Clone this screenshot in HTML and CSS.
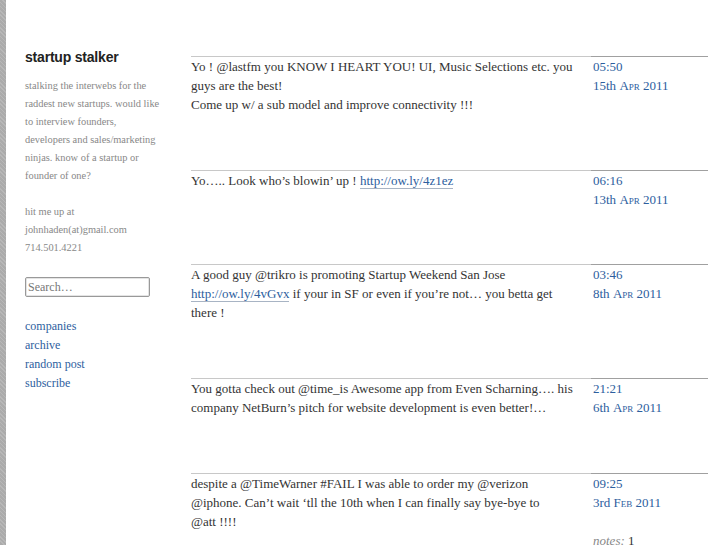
FILE: index.html
```html
<!DOCTYPE html>
<html>
<head>
<meta charset="utf-8">
<title>startup stalker</title>
<link rel="stylesheet" href="styles.css">
</head>
<body>
<div class="page">
  <div class="stripe"></div>
  <aside class="sidebar">
    <h1 class="title">startup stalker</h1>
    <p class="desc">stalking the interwebs for the raddest new startups. would like to interview founders, developers and sales/marketing ninjas. know of a startup or founder of one?</p>
    <p class="desc">hit me up at<br>johnhaden(at)gmail.com<br>714.501.4221</p>
    <div class="search">Search…</div>
    <nav class="nav">
      <a href="#">companies</a>
      <a href="#">archive</a>
      <a href="#">random post</a>
      <a href="#">subscribe</a>
    </nav>
  </aside>
  <main class="main">
    <div class="post">
      <div class="body">Yo ! @lastfm you KNOW I HEART YOU! UI, Music Selections etc. you guys are the best!<br>Come up w/ a sub model and improve connectivity !!!</div>
      <div class="meta"><a href="#">05:50</a><a href="#">15th <span class="sc">Apr</span> 2011</a></div>
    </div>
    <div class="post">
      <div class="body">Yo….. Look who’s blowin’ up ! <a class="link" href="#">http://ow.ly/4z1ez</a></div>
      <div class="meta"><a href="#">06:16</a><a href="#">13th <span class="sc">Apr</span> 2011</a></div>
    </div>
    <div class="post">
      <div class="body">A good guy @trikro is promoting Startup Weekend San Jose <a class="link" href="#">http://ow.ly/4vGvx</a> if your in SF or even if you’re not… you betta get there !</div>
      <div class="meta"><a href="#">03:46</a><a href="#">8th <span class="sc">Apr</span> 2011</a></div>
    </div>
    <div class="post">
      <div class="body">You gotta check out @time_is Awesome app from Even Scharning…. his company NetBurn’s pitch for website development is even better!…</div>
      <div class="meta"><a href="#">21:21</a><a href="#">6th <span class="sc">Apr</span> 2011</a></div>
    </div>
    <div class="post">
      <div class="body">despite a @TimeWarner #FAIL I was able to order my @verizon @iphone. Can’t wait ‘tll the 10th when I can finally say bye-bye to<br>@att !!!!</div>
      <div class="meta"><a href="#">09:25</a><a href="#">3rd <span class="sc">Feb</span> 2011</a><span class="notes"><em>notes:</em> 1</span></div>
    </div>
  </main>
</div>
</body>
</html>
```

FILE: styles.css
```css
html, body {
  margin: 0;
  padding: 0;
  background: #fff;
}
body {
  font-family: "Liberation Serif", "Times New Roman", serif;
  color: #333;
  overflow: hidden;
}
.page {
  display: flex;
  align-items: flex-start;
  min-height: 545px;
}
.stripe {
  width: 6px;
  align-self: stretch;
  background-color: #ababab;
  background-image: repeating-linear-gradient(45deg, rgba(255,255,255,0.15) 0 1px, transparent 1px 3px);
  flex: none;
}
.sidebar {
  width: 150px;
  margin-left: 19px;
  flex: none;
}
.title {
  font-family: "Liberation Sans", Arial, sans-serif;
  font-weight: bold;
  font-size: 14px;
  color: #222;
  margin: 48px 0 0 0;
  line-height: 18px;
  letter-spacing: -0.2px;
}
.desc {
  font-size: 10.4px;
  line-height: 18px;
  color: #888;
  margin: 11px 0 18px 0;
  width: 139px;
}
.desc + .desc {
  margin-top: 0;
}
.search {
  width: 119px;
  height: 18px;
  border: 1px solid #999;
  border-radius: 2px;
  box-shadow: inset 0 0 0 1px #e4e4e4;
  font-size: 12px;
  line-height: 18px;
  padding: 0 2px;
  color: #777;
  margin-top: 20px;
}
.nav {
  display: flex;
  flex-direction: column;
  margin-top: 20px;
}
.nav a {
  font-size: 12px;
  line-height: 19px;
  color: #2d5e9e;
  text-decoration: none;
}
.main {
  margin-left: 16px;
  margin-top: 56px;
  display: flex;
  flex-direction: column;
}
.post {
  display: flex;
  margin-bottom: 55px;
}
.body {
  width: 385px;
  padding: 0 15px 1px 0;
  border-top: 1px solid #c8c8c8;
  font-size: 13px;
  line-height: 19px;
  color: #333;
}
.link {
  color: #2d5e9e;
  text-decoration: none;
  border-bottom: 1px solid #a8b4c4;
}
.meta {
  width: 115px;
  padding: 0 0 0 2px;
  border-top: 1px solid #a0a0a0;
  font-size: 13px;
  line-height: 19px;
  display: flex;
  flex-direction: column;
}
.meta a {
  color: #2d5e9e;
  text-decoration: none;
}
.sc {
  font-variant: small-caps;
}
.notes {
  margin-top: 19px;
  color: #333;
}
.notes em {
  color: #888;
  font-style: italic;
}
```
